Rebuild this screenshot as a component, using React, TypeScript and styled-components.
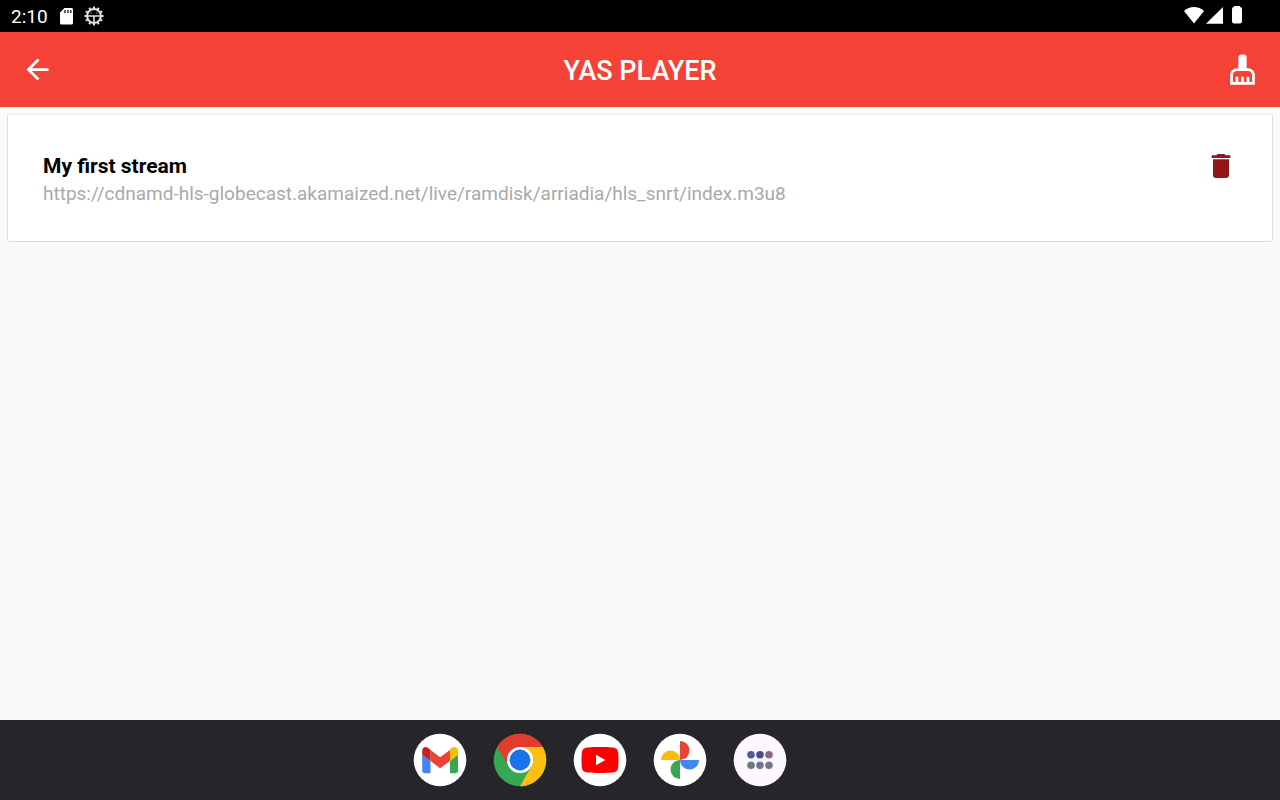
import React from "react";
import styled, { createGlobalStyle } from "styled-components";

const GlobalStyle = createGlobalStyle`
  * {
    box-sizing: border-box;
  }

  body {
    margin: 0;
    background: #fafafa;
    font-family: Roboto, sans-serif;
  }
`;

const Screen = styled.div`
  display: flex;
  flex-direction: column;
  min-height: 100vh;
`;

const StatusBar = styled.div`
  display: flex;
  align-items: center;
  justify-content: space-between;
  height: 32px;
  padding: 0 37px 0 11px;
  background: #000;
  color: #fff;
`;

const StatusGroup = styled.div<{ $gap: number }>`
  display: flex;
  align-items: center;
  gap: ${({ $gap }) => $gap}px;
`;

const Clock = styled.time`
  padding-top: 2px;
  font-size: 19px;
  line-height: 24px;
`;

const Icon = styled.svg`
  display: block;
  flex: none;
`;

const AppBar = styled.header`
  display: grid;
  grid-template-columns: 75px 1fr 75px;
  align-items: center;
  height: 75px;
  background: #f44336;
  color: #fff;
`;

const Title = styled.h1`
  margin: 0;
  padding-top: 2px;
  font-size: 27px;
  font-weight: 500;
  line-height: 36px;
  text-align: center;
`;

const IconButton = styled.button<{ $color?: string }>`
  display: flex;
  align-items: center;
  justify-content: center;
  padding: 0;
  border: 0;
  background: none;
  color: ${({ $color }) => $color ?? "inherit"};
  cursor: pointer;
`;

const Content = styled.main`
  flex: 1;
  padding: 7px;
`;

const StreamList = styled.ul`
  margin: 0;
  padding: 0;
  list-style: none;
`;

const StreamCard = styled.li`
  display: flex;
  align-items: flex-start;
  justify-content: space-between;
  padding: 35px;
  border: 1px solid #dcdcdc;
  border-top-color: #ebebeb;
  border-radius: 3px;
  background: #fff;
`;

const StreamName = styled.h2`
  margin: 0;
  color: #000;
  font-size: 21px;
  font-weight: 700;
  line-height: 32px;
`;

const StreamUrl = styled.p`
  margin: 0;
  color: #a9a9a9;
  font-size: 19px;
  line-height: 24px;
`;

const Dock = styled.nav`
  display: flex;
  align-items: center;
  justify-content: center;
  gap: 26px;
  height: 80px;
  padding-right: 80px;
  background: #26252a;
`;

const DockButton = styled(IconButton)`
  width: 54px;
  height: 54px;
`;

const streams = [
  {
    name: "My first stream",
    url: "https://cdnamd-hls-globecast.akamaized.net/live/ramdisk/arriadia/hls_snrt/index.m3u8",
  },
];

const teeth = Array.from({ length: 12 }, (_, i) => i * 30);

const SdCardIcon = () => (
  <Icon width="14" height="18" viewBox="0 0 14 18" aria-hidden="true">
    <path d="M5.500 1h7A1.500 1.500 0 0 1 14 2.500V16a1.500 1.500 0 0 1-1.500 1.500h-10A1.500 1.500 0 0 1 1 16V5.500z" fill="#fff" />
    <path d="M6 3v3M9 3v3M11.800 3v3" stroke="#000" strokeWidth="1.200" />
  </Icon>
);

const GearIcon = () => (
  <Icon width="20" height="20" viewBox="0 0 20 20" stroke="#e4e4e4" aria-hidden="true">
    <circle cx="10" cy="10" r="6.900" fill="none" strokeWidth="2" />
    {teeth.map((angle) => (
      <path key={angle} d="M10 .5v2.200" strokeWidth="2" transform={`rotate(${angle} 10 10)`} />
    ))}
    <path d="M4 10h12M10 10v6.500" fill="none" strokeWidth="1.600" />
    <path d="M6.500 7H8M12 7h1.500" strokeWidth="1" opacity=".6" />
  </Icon>
);

const SignalIcons = () => (
  <>
    <Icon width="20" height="18" viewBox="0 0 20 18" fill="#fff" aria-label="Wi-Fi">
      <path d="M10 16.500 0 4C2.800 1.400 6.200 0 10 0s7.200 1.400 10 4z" />
    </Icon>
    <Icon width="17" height="18" viewBox="0 0 17 18" fill="#fff" aria-label="Signal">
      <path d="M17 0v16.800H0z" />
    </Icon>
  </>
);

const BatteryIcon = () => (
  <Icon width="12" height="20" viewBox="0 0 12 20" fill="#fff" aria-label="Battery">
    <path d="M3 1V0h6v1a2 2 0 0 1 2 2v12.500a2 2 0 0 1-2 2H3a2 2 0 0 1-2-2V3a2 2 0 0 1 2-2z" />
  </Icon>
);

const BackIcon = () => (
  <Icon width="33" height="33" viewBox="0 0 24 24" fill="currentColor" aria-hidden="true">
    <path d="M20 11H7.830l5.590-5.590L12 4l-8 8 8 8 1.410-1.410L7.830 13H20v-2z" />
  </Icon>
);

const BroomIcon = () => (
  <Icon width="33" height="33" viewBox="0 0 24 24" fill="currentColor" aria-hidden="true">
    <path d="M16 11h-1V3c0-1.100-.9-2-2-2h-2c-1.100 0-2 .9-2 2v8H8c-2.760 0-5 2.240-5 5v7h18v-7c0-2.760-2.240-5-5-5zm3 10h-2v-3c0-.55-.45-1-1-1s-1 .45-1 1v3h-2v-3c0-.55-.45-1-1-1s-1 .45-1 1v3H9v-3c0-.55-.45-1-1-1s-1 .45-1 1v3H5v-5c0-1.650 1.350-3 3-3h8c1.650 0 3 1.350 3 3v5z" />
  </Icon>
);

const TrashIcon = () => (
  <Icon width="32" height="32" viewBox="0 0 24 24" fill="currentColor" aria-hidden="true">
    <path d="M6 19c0 1.100.9 2 2 2h8c1.100 0 2-.9 2-2V7H6v12zM19 4h-3.500l-1-1h-5l-1 1H5v2h14V4z" />
  </Icon>
);

const DockIcon = ({ fill = "#fff", children }: { fill?: string; children: React.ReactNode }) => (
  <Icon width="54" height="54" viewBox="0 0 54 54" aria-hidden="true">
    <circle cx="27" cy="27" r="26.3" fill={fill} />
    {children}
  </Icon>
);

const GmailIcon = () => (
  <DockIcon>
    <path d="M9.200 21.500 17.500 28v12.200h-5.700a2.600 2.600 0 0 1-2.600-2.600z" fill="#4285f4" />
    <path d="M45 21.500 37 28v12.200h5.400a2.600 2.600 0 0 0 2.600-2.600z" fill="#34a853" />
    <path d="M37 17v11l8-6.200V18c0-3.800-3.800-5.200-6.500-3.200z" fill="#fbbc04" />
    <path d="M17.500 28V17L27 24.200 37 17v11L27 35.200z" fill="#ea4335" />
    <path d="M9.200 18v3.800l8.300 6.200V17l-2.700-2.200c-2.600-2-5.600-.3-5.600 3.200z" fill="#c5221f" />
  </DockIcon>
);

const ChromeIcon = () => (
  <DockIcon fill="#34a853">
    <path d="M27 14H49.780A26.300 26.300 0 0 0 4.220 14L15.740 33.500z" fill="#e33b2e" />
    <path d="M27 14H49.780A26.300 26.300 0 0 1 27 53.300L38.260 33.500z" fill="#fcc015" />
    <circle cx="27" cy="27" r="13.100" fill="#fff" />
    <circle cx="27" cy="27" r="10.400" fill="#1a73e8" />
  </DockIcon>
);

const YouTubeIcon = () => (
  <DockIcon>
    <path
      d="M13 14.700c4-.9 24-.9 28 0 2.200.5 3.500 1.800 4 4 .7 4 .7 12.600 0 16.600-.5 2.200-1.800 3.500-4 4-4 .9-24 .9-28 0-2.200-.5-3.500-1.800-4-4-.7-4-.7-12.600 0-16.600.5-2.200 1.800-3.500 4-4z"
      fill="#f00"
    />
    <path d="M23 21.700v10.600l9.300-5.300z" fill="#fff" />
  </DockIcon>
);

const PhotosIcon = () => (
  <DockIcon>
    <path d="M27 8a9.500 9.500 0 0 1 0 19z" fill="#ea4335" />
    <path d="M46 27a9.500 9.500 0 0 1-19 0z" fill="#4285f4" />
    <path d="M27 46a9.500 9.500 0 0 1 0-19z" fill="#34a853" />
    <path d="M8 27a9.500 9.500 0 0 1 19 0z" fill="#fbbc04" />
  </DockIcon>
);

const AllAppsIcon = () => (
  <DockIcon fill="#fdf8ff">
    <circle cx="18" cy="21.700" r="3.800" fill="#565b93" />
    <circle cx="27" cy="21.700" r="3.800" fill="#474f86" />
    <circle cx="36" cy="21.700" r="3.800" fill="#8d6785" />
    <circle cx="18" cy="32.300" r="3.800" fill="#717588" />
    <circle cx="27" cy="32.300" r="3.800" fill="#717588" />
    <circle cx="36" cy="32.300" r="3.800" fill="#717588" />
  </DockIcon>
);

const dockApps = [
  { name: "Gmail", Logo: GmailIcon },
  { name: "Chrome", Logo: ChromeIcon },
  { name: "YouTube", Logo: YouTubeIcon },
  { name: "Photos", Logo: PhotosIcon },
  { name: "All apps", Logo: AllAppsIcon },
];

export default function App() {
  return (
    <Screen>
      <GlobalStyle />
      <StatusBar>
        <StatusGroup $gap={11}>
          <Clock>2:10</Clock>
          <SdCardIcon />
          <GearIcon />
        </StatusGroup>
        <StatusGroup $gap={8}>
          <StatusGroup $gap={2}>
            <SignalIcons />
          </StatusGroup>
          <BatteryIcon />
        </StatusGroup>
      </StatusBar>
      <AppBar>
        <IconButton type="button" aria-label="Back">
          <BackIcon />
        </IconButton>
        <Title>YAS PLAYER</Title>
        <IconButton type="button" aria-label="Clear all streams">
          <BroomIcon />
        </IconButton>
      </AppBar>
      <Content>
        <StreamList>
          {streams.map((stream) => (
            <StreamCard key={stream.url}>
              <div>
                <StreamName>{stream.name}</StreamName>
                <StreamUrl>{stream.url}</StreamUrl>
              </div>
              <IconButton type="button" $color="#931519" aria-label={`Delete ${stream.name}`}>
                <TrashIcon />
              </IconButton>
            </StreamCard>
          ))}
        </StreamList>
      </Content>
      <Dock aria-label="Dock">
        {dockApps.map(({ name, Logo }) => (
          <DockButton key={name} type="button" aria-label={name}>
            <Logo />
          </DockButton>
        ))}
      </Dock>
    </Screen>
  );
}
